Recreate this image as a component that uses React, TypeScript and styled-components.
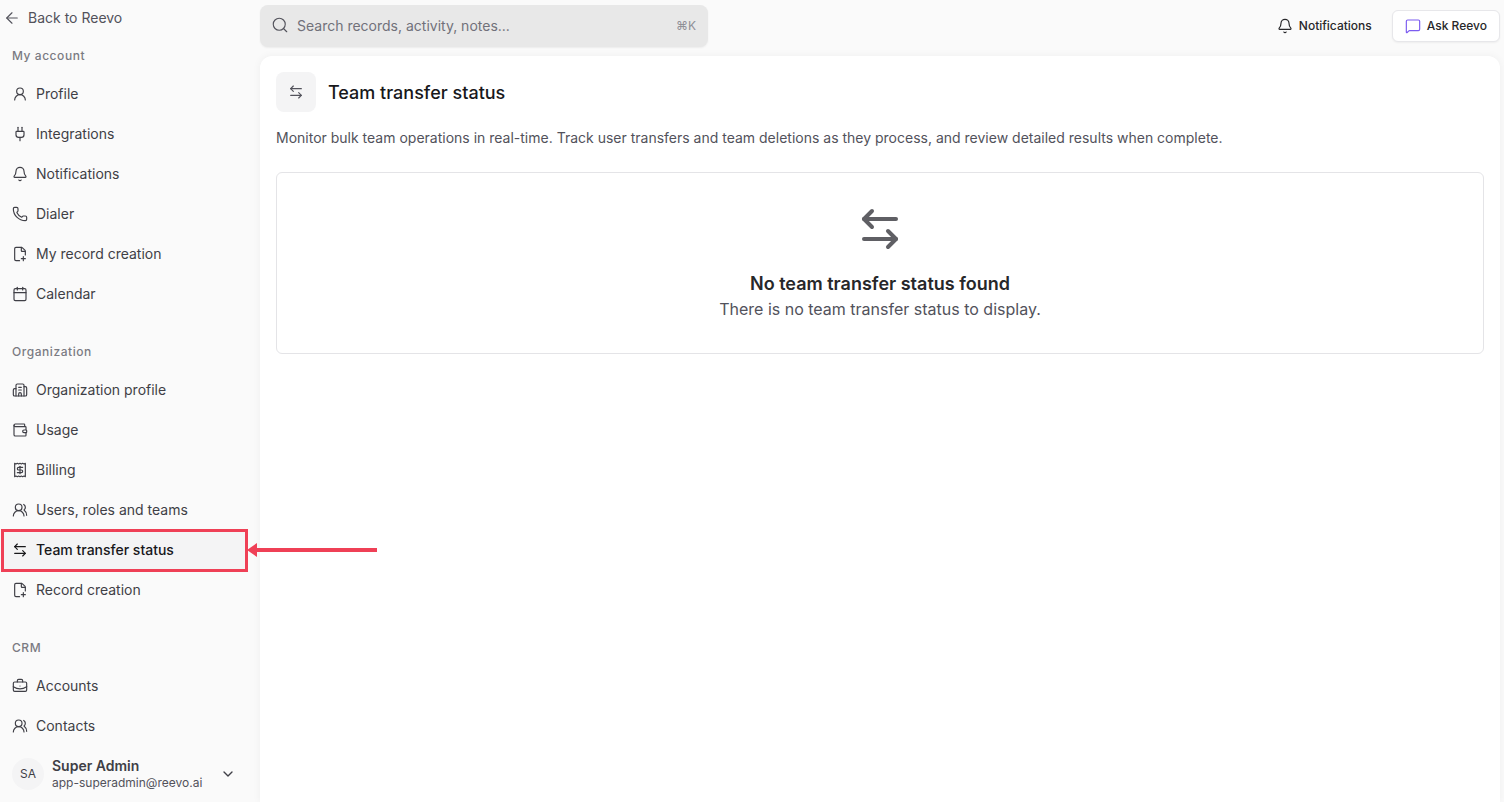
import React from 'react'
import styled, { createGlobalStyle } from 'styled-components'
import {
  ArrowLeft,
  ArrowLeftRight,
  Bell,
  BriefcaseBusiness,
  Building2,
  Calendar,
  ChevronDown,
  FilePlusCorner,
  MessageSquare,
  Phone,
  Plug,
  Receipt,
  Search,
  UserRound,
  UsersRound,
  Wallet,
} from 'lucide-react'

const GlobalStyle = createGlobalStyle`
  html, body {
    margin: 0;
    height: 100%;
    overflow: hidden;
    background: #fafafa;
    font-family: Inter, "Liberation Sans", sans-serif;
    color: #3f3f46;
  }
  * { box-sizing: border-box; }
`

const sections = [
  {
    title: 'My account',
    items: [
      { label: 'Profile', icon: UserRound },
      { label: 'Integrations', icon: Plug },
      { label: 'Notifications', icon: Bell },
      { label: 'Dialer', icon: Phone },
      { label: 'My record creation', icon: FilePlusCorner },
      { label: 'Calendar', icon: Calendar },
    ],
  },
  {
    title: 'Organization',
    items: [
      { label: 'Organization profile', icon: Building2 },
      { label: 'Usage', icon: Wallet },
      { label: 'Billing', icon: Receipt },
      { label: 'Users, roles and teams', icon: UsersRound },
      { label: 'Team transfer status', icon: ArrowLeftRight, active: true },
      { label: 'Record creation', icon: FilePlusCorner },
    ],
  },
  {
    title: 'CRM',
    items: [
      { label: 'Accounts', icon: BriefcaseBusiness },
      { label: 'Contacts', icon: UsersRound },
    ],
  },
]

const App: React.FC = () => {
  return (
    <Shell>
      <GlobalStyle />
      <Sidebar>
        <BackLink>
          <ArrowLeft size={18} strokeWidth={1.5} />
          Back to Reevo
        </BackLink>
        <Nav>
          {sections.map((section) => (
            <Section key={section.title}>
              <SectionTitle>{section.title}</SectionTitle>
              {section.items.map((item) => (
                <NavRow key={item.label} $active={item.active}>
                  <item.icon size={16} strokeWidth={1.75} />
                  {item.label}
                  {item.active && (
                    <Callout>
                      <CalloutArrow width="130" height="14" viewBox="0 0 130 14">
                        <path d="M0 7 10 0v5h120v4H10v5z" fill="#ef4056" />
                      </CalloutArrow>
                    </Callout>
                  )}
                </NavRow>
              ))}
            </Section>
          ))}
        </Nav>
        <UserCard>
          <Avatar>SA</Avatar>
          <UserText>
            <UserName>Super Admin</UserName>
            <UserEmail>app-superadmin@reevo.ai</UserEmail>
          </UserText>
          <ChevronDown size={16} strokeWidth={2} />
        </UserCard>
      </Sidebar>
      <Main>
        <TopBar>
          <SearchBox>
            <Search size={18} strokeWidth={1.5} />
            <SearchText>Search records, activity, notes...</SearchText>
            <Shortcut>⌘K</Shortcut>
          </SearchBox>
          <TopActions>
            <NotifyButton>
              <Bell size={16} strokeWidth={1.75} />
              Notifications
            </NotifyButton>
            <AskButton>
              <MessageSquare size={16} strokeWidth={1.75} color="#7c5cf0" />
              Ask Reevo
            </AskButton>
          </TopActions>
        </TopBar>
        <Card>
          <TitleRow>
            <TitleIcon>
              <ArrowLeftRight size={16} strokeWidth={1.75} />
            </TitleIcon>
            <Title>Team transfer status</Title>
          </TitleRow>
          <Description>
            Monitor bulk team operations in real-time. Track user transfers and team deletions as they process, and review detailed results when complete.
          </Description>
          <EmptyState>
            <ArrowLeftRight size={48} strokeWidth={2} color="#5f5f64" />
            <EmptyTitle>No team transfer status found</EmptyTitle>
            <EmptyText>There is no team transfer status to display.</EmptyText>
          </EmptyState>
        </Card>
      </Main>
    </Shell>
  )
}

const Shell = styled.div`
  display: flex;
  width: 1504px;
  height: 802px;
  overflow: hidden;
`

const Sidebar = styled.aside`
  display: flex;
  flex-direction: column;
  flex: 0 0 260px;
  height: 802px;
`

const BackLink = styled.div`
  display: flex;
  align-items: center;
  gap: 7px;
  height: 36px;
  padding: 0 0 1px 3px;
  font-size: 14px;
  color: #52525b;
`

const Nav = styled.nav`
  flex: 1;
  min-height: 0;
  display: flex;
  flex-direction: column;
  gap: 18px;
`

const Section = styled.section`
  display: flex;
  flex-direction: column;
`

const SectionTitle = styled.div`
  display: flex;
  align-items: center;
  height: 38px;
  padding-left: 12px;
  font-size: 12px;
  font-weight: 500;
  letter-spacing: 0.55px;
  color: #7a7a82;
`

const NavRow = styled.div<{ $active?: boolean }>`
  position: relative;
  display: flex;
  align-items: center;
  gap: 8px;
  height: 40px;
  padding: 0 0 1px ${({ $active }) => ($active ? '10px' : '12px')};
  font-size: 14px;
  font-weight: ${({ $active }) => ($active ? 500 : 400)};
  color: ${({ $active }) => ($active ? '#18181b' : '#3f3f46')};
  background: ${({ $active }) => ($active ? '#f4f4f5' : 'transparent')};
  margin-right: ${({ $active }) => ($active ? '14px' : '0')};
  margin-left: ${({ $active }) => ($active ? '2px' : '0')};

  svg {
    flex: none;
  }
`

const Callout = styled.div`
  position: absolute;
  inset: -1px -2px -2px -1px;
  border: 3px solid #ef4056;
  pointer-events: none;
`

const CalloutArrow = styled.svg`
  position: absolute;
  left: 243px;
  top: 11px;
`

const UserCard = styled.div`
  display: flex;
  align-items: center;
  height: 56px;
  flex: none;
  padding: 0 24px 0 12px;
  background: #fafafa;

  svg {
    margin-left: auto;
    color: #3f3f46;
  }
`

const Avatar = styled.div`
  display: flex;
  align-items: center;
  justify-content: center;
  width: 32px;
  height: 32px;
  margin: 0 8px 1px 0;
  border-radius: 50%;
  background: #f4f4f5;
  font-size: 12px;
  color: #3f3f46;
`

const UserText = styled.div`
  display: flex;
  flex-direction: column;
`

const UserName = styled.span`
  font-size: 14px;
  font-weight: 600;
  line-height: 18px;
  color: #3f3f46;
`

const UserEmail = styled.span`
  font-size: 12px;
  line-height: 16px;
  color: #52525b;
`

const Main = styled.main`
  display: flex;
  flex-direction: column;
  flex: 1;
  min-width: 0;
  padding-right: 4px;
`

const TopBar = styled.header`
  display: flex;
  align-items: center;
  justify-content: space-between;
  height: 56px;
  padding-bottom: 4px;
  flex: none;
`

const SearchBox = styled.div`
  display: flex;
  align-items: center;
  gap: 8px;
  width: 448px;
  height: 42px;
  padding: 0 12px 2px 11px;
  border-radius: 8px;
  background: #e8e8e8;
  box-shadow: 0 1px 2px rgba(0, 0, 0, 0.06);
  color: #52525b;
`

const SearchText = styled.span`
  flex: 1;
  font-size: 14px;
  color: #71717a;
`

const Shortcut = styled.span`
  font-size: 12px;
  color: #8f8f96;
`

const TopActions = styled.div`
  display: flex;
  align-items: center;
  gap: 8px;
`

const NotifyButton = styled.button`
  display: flex;
  align-items: center;
  gap: 6px;
  height: 32px;
  padding: 0 12px 1px;
  border: 0;
  background: transparent;
  font: 500 12px Inter, "Liberation Sans", sans-serif;
  color: #27272a;
`

const AskButton = styled.button`
  display: flex;
  align-items: center;
  gap: 6px;
  height: 32px;
  padding: 0 12px 1px;
  border: 1px solid #e7e7ea;
  border-radius: 6px;
  background: #fff;
  box-shadow: 0 1px 2px rgba(0, 0, 0, 0.05);
  font: 500 12px Inter, "Liberation Sans", sans-serif;
  color: #27272a;
`

const Card = styled.section`
  flex: 1;
  padding: 16px;
  border-radius: 12px 12px 0 0;
  background: #fff;
  box-shadow: 0 0 8px rgba(0, 0, 0, 0.05);
`

const TitleRow = styled.div`
  display: flex;
  align-items: center;
  gap: 12px;
`

const TitleIcon = styled.div`
  display: flex;
  align-items: center;
  justify-content: center;
  width: 40px;
  height: 40px;
  border-radius: 8px;
  background: #f4f4f5;
  color: #52525b;
`

const Title = styled.h1`
  margin: 0;
  font-size: 18px;
  font-weight: 500;
  color: #18181b;
`

const Description = styled.p`
  margin: 16px 0 0;
  font-size: 14px;
  line-height: 20px;
  color: #52525b;
`

const EmptyState = styled.div`
  display: flex;
  flex-direction: column;
  align-items: center;
  height: 182px;
  margin-top: 24px;
  padding-top: 32px;
  border: 1px solid #e4e4e7;
  border-radius: 6px;
`

const EmptyTitle = styled.h2`
  margin: 19px 0 0;
  font-size: 18px;
  line-height: 24px;
  font-weight: 600;
  color: #27272a;
`

const EmptyText = styled.p`
  margin: 1px 0 0;
  font-size: 16px;
  line-height: 24px;
  color: #52525b;
`

export default App
